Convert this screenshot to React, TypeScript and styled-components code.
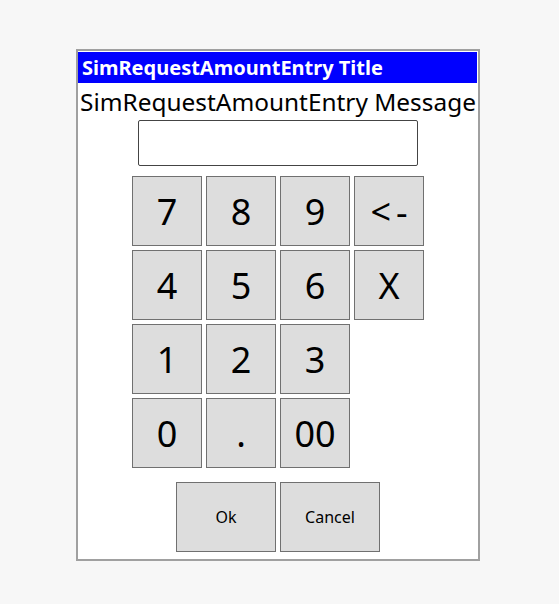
import React from 'react';
import styled, {createGlobalStyle} from 'styled-components';

const GlobalStyle = createGlobalStyle`
    body {
        margin: 0;
        background: #f7f7f7;
        font-family: "Noto Sans", "Open Sans", sans-serif;
    }
`

const keyRows = [
    ['7', '8', '9', '<-'],
    ['4', '5', '6', 'X'],
    ['1', '2', '3'],
    ['0', '.', '00'],
];

export default function App() {
    return (
        <Page>
            <GlobalStyle/>
            <Dialog>
                <TitleBar>SimRequestAmountEntry Title</TitleBar>
                <Message>SimRequestAmountEntry Message</Message>
                <AmountInput/>
                <KeyPad>
                    {keyRows.map((row, i) => (
                        <KeyRow key={i}>
                            {row.map((k) => (
                                <Key key={k} $spaced={k === '<-'}>{k}</Key>
                            ))}
                        </KeyRow>
                    ))}
                </KeyPad>
                <Actions>
                    <ActionButton>Ok</ActionButton>
                    <ActionButton>Cancel</ActionButton>
                </Actions>
            </Dialog>
        </Page>
    );
}

const Page = styled.div`
    padding: 49px 0 0 76px;
`

const Dialog = styled.div`
    width: 400px;
    height: 508px;
    border: 2px solid #a0a0a0;
    background: #fff;
    display: flex;
    flex-direction: column;
    align-items: center;
`

const TitleBar = styled.div`
    align-self: stretch;
    margin: 1px 1px 0 0;
    height: 31px;
    background: #0000ff;
    color: #fff;
    font-weight: 700;
    font-size: 20px;
    line-height: 31px;
    padding-left: 4px;
    white-space: nowrap;
`

const Message = styled.div`
    font-size: 24.4px;
    line-height: 37px;
    color: #000;
    white-space: nowrap;
`

const AmountInput = styled.div`
    width: 278px;
    height: 44px;
    border: 1px solid #444;
    border-radius: 2px;
    margin-bottom: 10px;
`

const KeyPad = styled.div`
    width: 292px;
    display: flex;
    flex-direction: column;
    gap: 4px;
    margin-bottom: 14px;
`

const KeyRow = styled.div`
    display: flex;
    gap: 4px;
`

const Key = styled.div<{ $spaced?: boolean }>`
    box-sizing: border-box;
    width: 70px;
    height: 70px;
    border: 1px solid #707070;
    background: #dddddd;
    display: flex;
    align-items: center;
    justify-content: center;
    font-size: 36px;
    color: #000;
    letter-spacing: ${p => p.$spaced ? '5px' : 'normal'};
    text-indent: ${p => p.$spaced ? '5px' : '0'};
`

const Actions = styled.div`
    display: flex;
    gap: 4px;
`

const ActionButton = styled(Key)`
    width: 100px;
    font-size: 16px;
`
